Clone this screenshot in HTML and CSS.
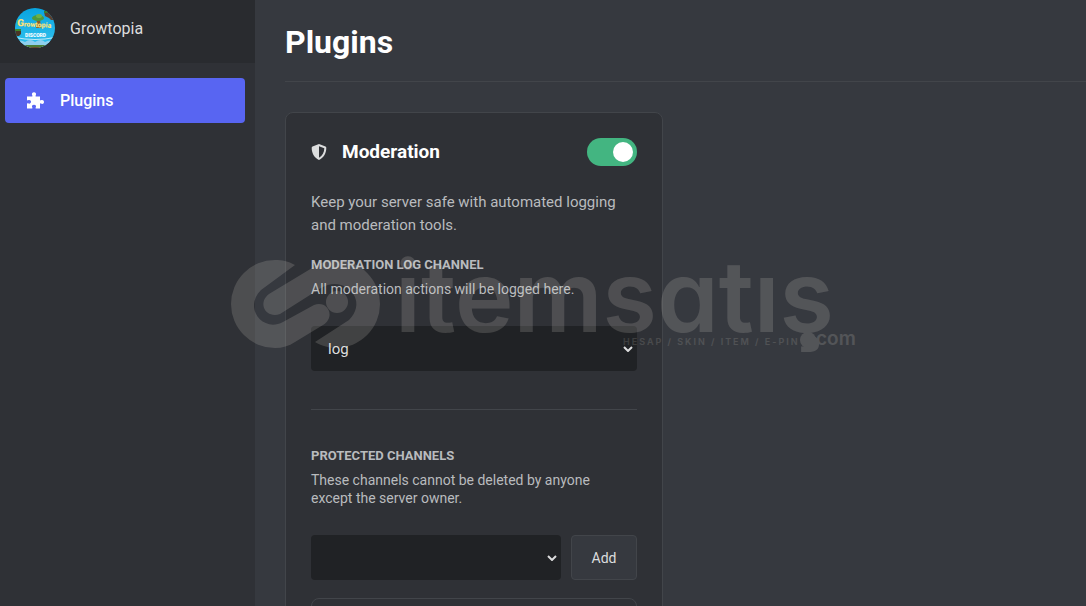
FILE: index.html
```html
<!DOCTYPE html>
<html lang="en">
<head>
  <meta charset="UTF-8">
  <meta name="viewport" content="width=device-width, initial-scale=1.0">
  <title>Growtopia - Plugins</title>
  <link rel="stylesheet" href="styles.css">
</head>
<body>
  <aside class="sidebar">
    <div class="server">
      <svg class="server-icon" viewBox="0 0 40 40" aria-hidden="true">
        <defs>
          <clipPath id="round"><circle cx="20" cy="20" r="20"/></clipPath>
          <linearGradient id="sky" x1="0" y1="0" x2="0" y2="1">
            <stop offset="0" stop-color="#08a4e0"/>
            <stop offset="1" stop-color="#35c3ee"/>
          </linearGradient>
        </defs>
        <g clip-path="url(#round)">
          <rect width="40" height="40" fill="url(#sky)"/>
          <path d="M29 4h11v8h-4l-2-2-4-2z" fill="#5b4030"/>
          <path d="M29 3h9v2h-9z" fill="#3f7a2a"/>
          <path d="M0 22h6v4l-2 2H0z" fill="#4a3626"/>
          <path d="M0 21h6v2H0z" fill="#3f8a2c"/>
          <path d="M22 11h3l1 9h-5z" fill="#8a5a2b"/>
          <ellipse cx="23" cy="10" rx="6" ry="3" fill="#4f9a3c"/>
          <ellipse cx="24" cy="8" rx="3" ry="2" fill="#6cb04a"/>
          <text class="logo-name" x="2" y="19" transform="rotate(3 20 18)"><tspan class="logo-initial">G</tspan>rowtopia</text>
          <text class="logo-tag" x="10" y="29">DISCORD</text>
          <path d="M0 29q20 4 40 0v1q-20 4-40 0z" fill="#bfeaf7"/>
          <path d="M0 34q5-3 10 0q5-4 10 0q6-4 10 0q5-3 10 0v6H0z" fill="#8fd0ee"/>
          <path d="M6 37h28v3H6z" fill="#4a7d35"/>
          <path d="M10 39h20v1H10z" fill="#6a4a30"/>
        </g>
      </svg>
      <span class="server-name">Growtopia</span>
    </div>
    <nav class="menu">
      <a href="#plugins" class="menu-link">
        <svg class="menu-icon" viewBox="0 0 17 17" aria-hidden="true">
          <path d="M0 4.500h4.800c.6 0 .8-.5.500-1C4.300 2 5.300.3 7 .3S9.700 2 8.700 3.500c-.3.500-.1 1 .5 1H13v3.300c0 .6.500.8 1 .5 1.500-1 3 0 3 1.600s-1.500 2.600-3 1.600c-.5-.3-1-.1-1 .5v4.500H9.200c-.6 0-.8-.5-.5-1 .9-1.500 0-2.800-1.700-2.800s-2.600 1.300-1.700 2.800c.3.500.1 1-.5 1H0v-4.700c0-.6.500-.8 1-.5 1.600.9 3 0 3-1.500S2.600 7.400 1 8.300c-.5.300-1 .1-1-.5z"/>
        </svg>
        Plugins
      </a>
    </nav>
  </aside>

  <main class="content" id="plugins">
    <h1>Plugins</h1>

    <div class="plugins-grid">
      <section class="card">
        <div class="card-header">
          <svg class="card-icon" viewBox="0 0 16 16" aria-hidden="true">
            <path fill-rule="evenodd" d="M8 0l6.500 2.600c.5.200.8.600.8 1.200C15.300 9 13 13.800 8 16 3 13.800.7 9 .7 3.800c0-.6.3-1 .8-1.200zM8 2.200v11.600c3.500-1.900 5.200-5.500 5.300-9.500z"/>
          </svg>
          <h2 id="moderation">Moderation</h2>
          <input type="checkbox" class="toggle" aria-labelledby="moderation" checked>
        </div>
        <p class="card-text">Keep your server safe with automated logging and moderation tools.</p>

        <div class="setting">
          <label for="logChannel">Moderation log channel</label>
          <p class="hint">All moderation actions will be logged here.</p>
          <div class="select-wrap">
            <select id="logChannel">
              <option>log</option>
            </select>
            <svg class="arrow" viewBox="0 0 10 6" aria-hidden="true"><path d="M1 1l4 4 4-4"/></svg>
          </div>
        </div>

        <div class="setting">
          <label for="protectedChannel">Protected channels</label>
          <p class="hint">These channels cannot be deleted by anyone except the server owner.</p>
          <div class="add-row">
            <div class="select-wrap">
              <select id="protectedChannel">
                <option></option>
              </select>
              <svg class="arrow" viewBox="0 0 10 6" aria-hidden="true"><path d="M1 1l4 4 4-4"/></svg>
            </div>
            <button type="button" class="btn">Add</button>
          </div>
          <div class="channel-list"></div>
        </div>
      </section>
    </div>
  </main>

  <svg class="watermark" viewBox="0 0 640 100" aria-hidden="true">
    <g class="mark">
      <path d="M70 10C63 6 57 5 50 5a44 44 0 0 0 0 88c7 0 14-2 20-6l28-17c13-8 5-25-9-20L58 67c-20 11-40-14-22-32z"/>
      <path d="M90 87c7 4 15 6 21 6a44 44 0 0 0 0-88c-7 0-13 2-19 5L44 39c-12 9-3 25 11 20l41-26c24-14 48 13 28 32z"/>
      <circle cx="112" cy="47" r="11"/>
      <text class="mark-name" x="170" y="77">itemsatış</text>
      <circle cx="583" cy="85" r="8"/>
      <text class="mark-com" x="591" y="90">com</text>
    </g>
    <text class="mark-tag" x="398" y="90">HESAP / SKIN / ITEM / E-PIN</text>
  </svg>
</body>
</html>
```
FILE: styles.css
```css
* {
  margin: 0;
  padding: 0;
  box-sizing: border-box;
}

body {
  font-family: Roboto, sans-serif;
  background-color: #36393f;
  color: #dcddde;
  display: flex;
  height: 100vh;
  overflow: hidden;
  position: relative;
}

.sidebar {
  width: 255px;
  flex-shrink: 0;
  background-color: #2f3136;
}

.server {
  display: flex;
  align-items: center;
  gap: 15px;
  height: 63px;
  padding: 0 15px 7px;
  background-color: #292b2f;
}

.server-icon {
  width: 40px;
  height: 40px;
}

.logo-name {
  font-size: 7px;
  font-weight: 900;
  fill: #f7e27a;
}

.logo-initial {
  font-size: 10px;
}

.logo-tag {
  font-size: 5px;
  font-weight: 900;
  fill: #fff;
}

.menu {
  padding: 15px 10px 0 5px;
}

.menu-link {
  display: flex;
  align-items: center;
  gap: 16px;
  height: 45px;
  padding: 0 22px;
  border-radius: 4px;
  background-color: #5865f2;
  color: #fff;
  font-weight: 500;
  text-decoration: none;
}

.menu-icon {
  width: 17px;
  height: 17px;
  fill: #fff;
}

.content {
  flex: 1;
  padding-left: 30px;
}

h1 {
  font-size: 32px;
  line-height: 38px;
  color: #fff;
  padding: 23px 0 20px;
  border-bottom: 1px solid #42454a;
}

.plugins-grid {
  display: grid;
  grid-template-columns: repeat(2, 1fr);
  gap: 25px;
  padding: 30px 20px 30px 0;
}

.card {
  padding: 25px;
  border: 1px solid #42454a;
  border-radius: 8px;
  background-color: #2f3136;
}

.card-header {
  display: flex;
  align-items: center;
  gap: 15px;
  margin-bottom: 25px;
}

.card-icon {
  width: 16px;
  height: 16px;
  fill: #dcddde;
}

h2 {
  flex: 1;
  font-size: 19px;
  line-height: 28px;
  color: #fff;
}

.toggle {
  appearance: none;
  display: flex;
  align-items: center;
  justify-content: flex-end;
  width: 50px;
  height: 28px;
  padding: 4px;
  border-radius: 14px;
  background-color: #72767d;
}

.toggle:checked {
  background-color: #43b581;
}

.toggle::before {
  content: "";
  width: 20px;
  height: 20px;
  border-radius: 50%;
  background-color: #fff;
}

.card-text {
  font-size: 15px;
  line-height: 23px;
  color: #b9bbbe;
}

.setting {
  padding-top: 20px;
}

.setting + .setting {
  margin-top: 38px;
  padding-top: 38px;
  border-top: 1px solid #42454a;
}

.setting label {
  display: block;
  margin-bottom: 7px;
  font-size: 13px;
  font-weight: 700;
  line-height: 16px;
  text-transform: uppercase;
  color: #b9bbbe;
}

.hint {
  margin-bottom: 28px;
  padding-right: 20px;
  font-size: 14px;
  line-height: 18px;
  color: #b9bbbe;
}

.select-wrap {
  display: grid;
  flex: 1;
  align-items: center;
}

.select-wrap select,
.arrow {
  grid-area: 1 / 1;
}

select {
  appearance: none;
  width: 100%;
  height: 45px;
  padding: 0 17px;
  border: none;
  border-radius: 4px;
  background-color: #202225;
  color: #dcddde;
  font-family: inherit;
  font-size: 15px;
}

.arrow {
  justify-self: end;
  width: 10px;
  height: 6px;
  margin-right: 4px;
  fill: none;
  stroke: #dcddde;
  stroke-width: 2;
  pointer-events: none;
}

.add-row {
  display: flex;
  gap: 10px;
}

.btn {
  width: 66px;
  height: 45px;
  border: 1px solid #42454a;
  border-radius: 4px;
  background-color: #36393f;
  color: #dcddde;
  font-family: inherit;
  font-size: 14px;
  cursor: pointer;
}

.channel-list {
  height: 60px;
  margin-top: 18px;
  border: 1px solid #42454a;
  border-radius: 8px;
}

.watermark {
  position: absolute;
  left: 225px;
  top: 255px;
  width: 640px;
  height: 100px;
  pointer-events: none;
}

.mark {
  fill: #ece6dc;
  opacity: 0.16;
}

.mark-name,
.mark-com {
  font-family: Inter, sans-serif;
  font-weight: 600;
  font-feature-settings: "cv11";
}

.mark-name {
  font-size: 99px;
}

.mark-com {
  font-size: 19px;
}

.mark-tag {
  font-family: Inter, sans-serif;
  font-size: 9px;
  font-weight: 600;
  letter-spacing: 2px;
  fill: #ece6dc;
  opacity: 0.14;
}
```
